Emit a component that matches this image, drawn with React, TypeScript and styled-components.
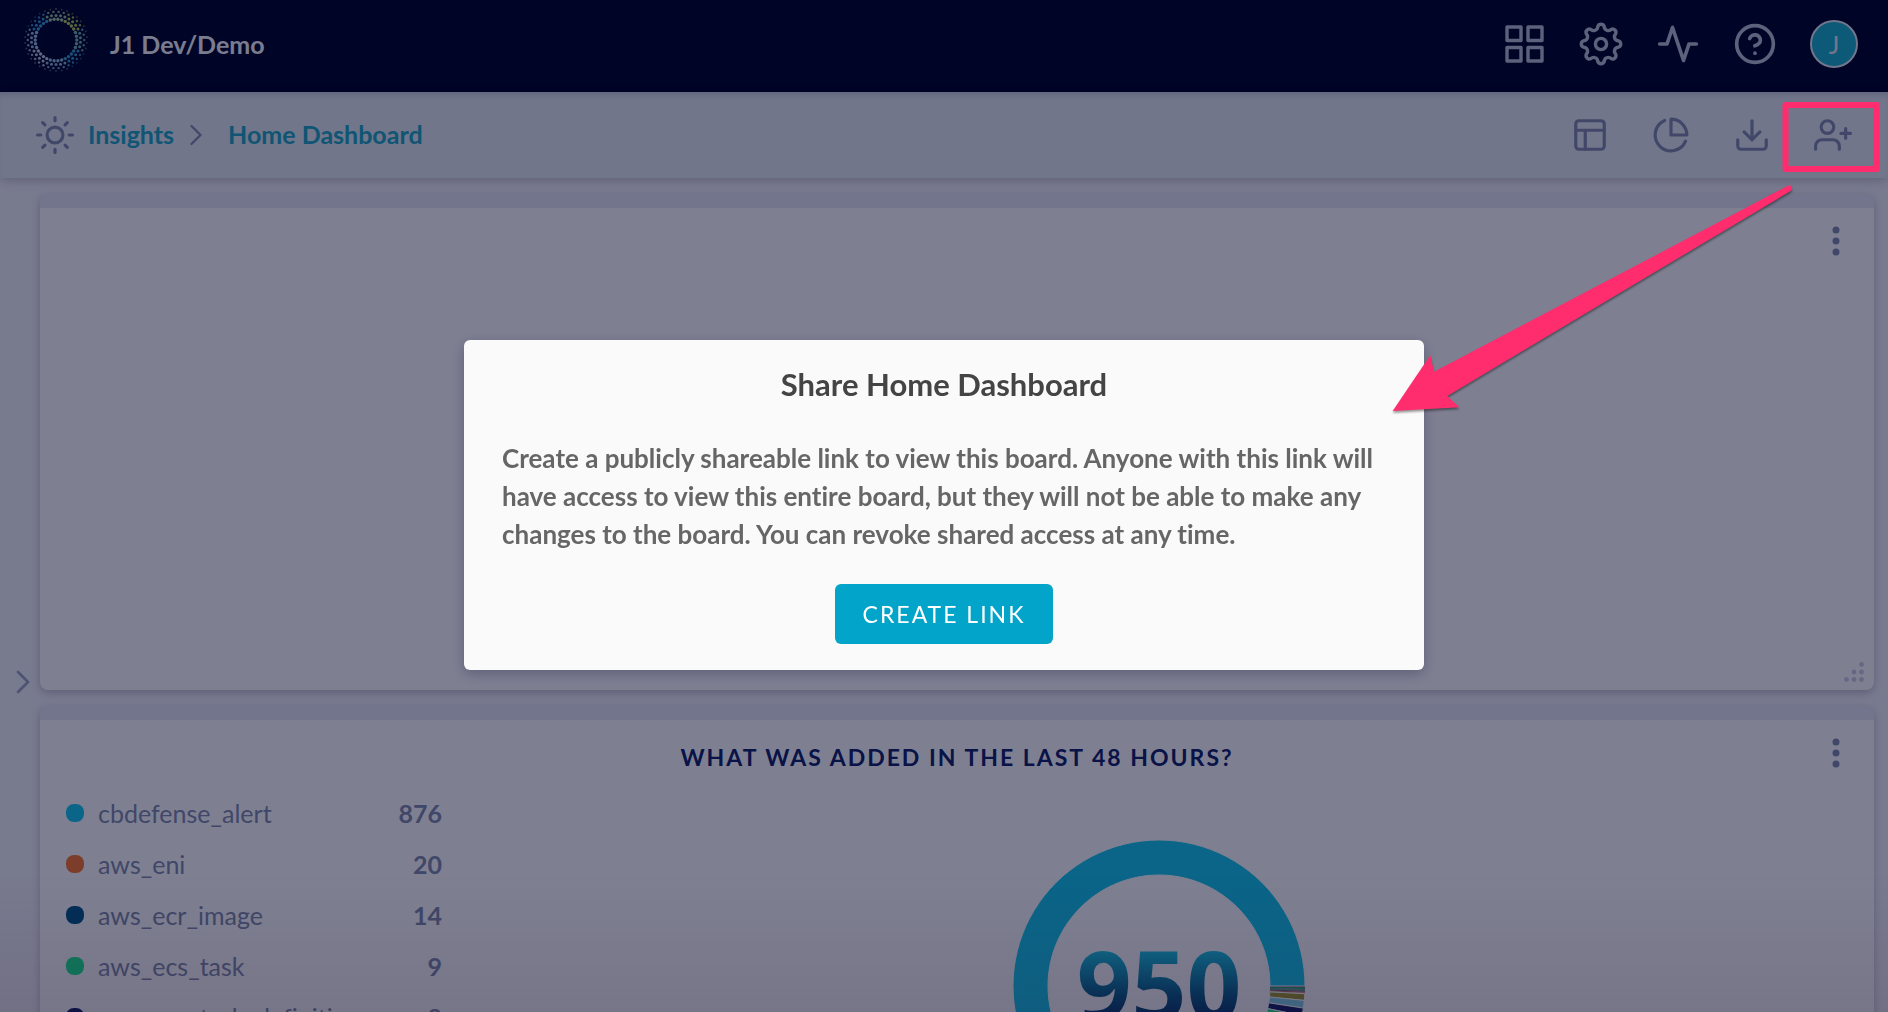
import React from "react";
import styled, { createGlobalStyle } from "styled-components";
import {
  FiActivity,
  FiChevronRight,
  FiDownload,
  FiHelpCircle,
  FiLayout,
  FiPieChart,
  FiSun,
  FiUserPlus,
} from "react-icons/fi";

const color = {
  navy: "#000426",
  page: "#f1f0f7",
  toolbar: "#e4e8f0",
  card: "#fcfdfe",
  text: "#828aaa",
  iconLight: "#b8c0d2",
  link: "#20a6c0",
  heading: "#122268",
  accent: "#02a5c9",
  pink: "#ff2d6e",
};

const GlobalStyle = createGlobalStyle`
  * { box-sizing: border-box; }
  body {
    margin: 0;
    overflow: hidden;
    background: ${color.page};
    font-family: Lato, "Open Sans", sans-serif;
    font-size: 25px;
    line-height: 32px;
    font-variant-ligatures: none;
    color: ${color.text};
  }
  h1, h2, p, ul, ol { margin: 0; padding: 0; }
  ul, ol { list-style: none; }
  a { color: inherit; text-decoration: none; }
`;

const Page = styled.div`
  height: 100vh;
  overflow: hidden;
  display: flex;
  flex-direction: column;
`;

const Header = styled.header`
  flex: none;
  height: 92px;
  padding: 0 30px 4px 24px;
  display: flex;
  align-items: center;
  justify-content: space-between;
  background: ${color.navy};
`;

const Brand = styled.a`
  display: flex;
  align-items: center;
  gap: 22px;
  font-weight: 700;
  color: #f4f4f8;

  svg {
    margin-bottom: 8px;
  }
`;

const Actions = styled.div<{ $gap: number }>`
  display: flex;
  align-items: center;
  gap: ${(p) => p.$gap}px;
`;

const IconButton = styled.button<{ $light?: boolean }>`
  display: flex;
  padding: 0;
  border: 0;
  background: none;
  color: ${(p) => (p.$light ? color.iconLight : color.text)};
  cursor: pointer;
`;

const Avatar = styled.button`
  width: 48px;
  height: 48px;
  padding: 0;
  border: 2px solid #e6e8ee;
  border-radius: 50%;
  background: #18aecb;
  color: #e6e8ee;
  font: inherit;
`;

const Toolbar = styled.div`
  position: relative;
  flex: none;
  height: 86px;
  padding: 0 36px;
  display: flex;
  align-items: center;
  justify-content: space-between;
  background: ${color.toolbar};
  box-shadow: 0 2px 10px rgba(0, 4, 38, 0.22), inset 0 6px 8px -6px rgba(0, 4, 38, 0.25);
`;

const Crumbs = styled.ol`
  display: flex;
  align-items: center;
  gap: 14px;
  font-weight: 700;
  color: ${color.link};

  li {
    display: flex;
    align-items: center;
    gap: 4px;
  }

  svg {
    color: ${color.text};
  }

  a {
    padding-bottom: 2px;
  }
`;

const Main = styled.main`
  flex: 1;
  min-height: 0;
  display: flex;
  padding: 16px 14px 0 0;
`;

const Rail = styled.aside`
  flex: none;
  width: 40px;
  padding-top: 468px;
  padding-left: 3px;
`;

const Board = styled.div`
  flex: 1;
  display: flex;
  flex-direction: column;
  gap: 16px;
`;

const Card = styled.section`
  position: relative;
  flex: none;
  height: 496px;
  border-top: 14px solid #e4e7f0;
  border-radius: 8px;
  background: ${color.card};
  box-shadow: 0 3px 8px rgba(0, 4, 38, 0.22);
`;

const CardMenu = styled.button`
  position: absolute;
  top: 16px;
  right: 28px;
  width: 20px;
  height: 36px;
  padding: 0;
  border: 0;
  background: none;
  color: ${color.text};
`;

const ResizeHandle = styled.svg`
  position: absolute;
  right: 8px;
  bottom: 6px;
  fill: #cacce0;
`;

const CardTitle = styled.h2`
  padding-top: 21px;
  text-align: center;
  font-size: 23px;
  font-weight: 700;
  letter-spacing: 2px;
  color: ${color.heading};
`;

const CardBody = styled.div`
  display: flex;
  padding: 14px 26px 0;
`;

const Legend = styled.ul`
  width: 376px;
`;

const LegendItem = styled.li`
  display: flex;
  align-items: center;
  gap: 14px;
  height: 51px;
`;

const Swatch = styled.span<{ $color: string }>`
  width: 18px;
  height: 18px;
  border-radius: 8px;
  background: ${(p) => p.$color};
`;

const LegendName = styled.span`
  flex: 1;
`;

const LegendValue = styled.span`
  font-weight: 700;
`;

const ChartArea = styled.div`
  flex: 1;
  display: flex;
  justify-content: center;
  padding: 53px 0 0 28px;
`;

const Chart = styled.div`
  display: grid;
  place-items: center;
  width: 292px;
  height: 292px;

  > * {
    grid-area: 1 / 1;
  }
`;

const Total = styled.span`
  font-family: "Open Sans", sans-serif;
  font-size: 96px;
  line-height: 92px;
  padding-bottom: 4px;
  font-weight: 700;
  color: transparent;
  background: linear-gradient(#1ccbe8 10%, #0a5c88 60%, #04205e 95%);
  background-clip: text;
`;

const Backdrop = styled.div`
  position: fixed;
  inset: 0;
  display: flex;
  align-items: center;
  justify-content: center;
  padding-bottom: 2px;
  background:
    linear-gradient(to top, rgba(60, 30, 50, 0.1), transparent 140px),
    rgba(0, 4, 38, 0.5);
`;

const Dialog = styled.div`
  width: 960px;
  padding: 25px 38px 26px;
  display: flex;
  flex-direction: column;
  align-items: center;
  border-radius: 6px;
  background: #fafafa;
  box-shadow: 0 4px 14px rgba(0, 4, 38, 0.25);
`;

const DialogTitle = styled.h1`
  font-size: 31px;
  line-height: 38px;
  font-weight: 700;
  color: #444;
`;

const DialogText = styled.p`
  align-self: stretch;
  margin: 36px 0 31px;
  font-size: 26px;
  line-height: 38px;
  font-weight: 700;
  color: #666;
`;

const PrimaryButton = styled.button`
  height: 60px;
  padding: 0 28px;
  border: 0;
  border-radius: 6px;
  background: ${color.accent};
  color: #fff;
  font: inherit;
  font-size: 23px;
  letter-spacing: 2px;
`;

const Callout = styled.svg`
  position: fixed;
  top: 0;
  right: 0;
  pointer-events: none;
`;

const Arrow = styled.path`
  fill: ${color.pink};
  filter: drop-shadow(0 2px 1px rgba(0, 0, 0, 0.4));
`;

const point = (r: number, deg: number) => {
  const a = (deg * Math.PI) / 180;
  return [r * Math.cos(a), r * Math.sin(a)];
};

const logoRings = [
  { r: 20.8, dot: 1.7, shift: 0, alpha: 1 },
  { r: 24.6, dot: 1.5, shift: 0.5, alpha: 0.95 },
  { r: 28.2, dot: 1.2, shift: 0, alpha: 0.85 },
  { r: 31, dot: 0.9, shift: 0.5, alpha: 0.5 },
];
const logoHues = ["#6fb8b0", "#3d9fd0", "#8fb8dc", "#c4cbe4", "#9fc0e0", "#3a9fd6", "#a3c79a", "#b8cc5c"];

const Logo = () => (
  <svg width="64" height="64" viewBox="-32 -32 64 64" aria-hidden="true">
    {logoRings.map((ring) =>
      Array.from({ length: 34 }, (_, i) => {
        const deg = ((i + ring.shift) * 360) / 34;
        const [x, y] = point(ring.r, deg);
        return (
          <circle
            key={`${ring.r}-${i}`}
            cx={x}
            cy={y}
            r={ring.dot}
            opacity={ring.alpha}
            fill={logoHues[Math.round(deg / 45) % 8]}
          />
        );
      })
    )}
  </svg>
);

const GridIcon = () => (
  <svg width="44" height="44" fill="none" stroke="currentColor" strokeWidth="3.4" strokeLinejoin="round">
    <rect x="5" y="5" width="14" height="13.5" />
    <rect x="26" y="5" width="14" height="13.5" />
    <rect x="5" y="25.5" width="14" height="13.5" />
    <rect x="26" y="25.5" width="14" height="13.5" />
  </svg>
);

const gearPath =
  Array.from({ length: 8 }, (_, i) => {
    const [x1, y1] = point(17.7, i * 45 - 10.5);
    const [x2, y2] = point(17.7, i * 45 + 10.5);
    const enter = i === 0 ? `M${x1} ${y1}` : `A4 4 0 0 0 ${x1} ${y1}`;
    return `${enter}A3.4 3.4 0 0 1 ${x2} ${y2}`;
  }).join("") + `A4 4 0 0 0 ${point(17.7, -10.5).join(" ")}Z`;

const GearIcon = () => (
  <svg width="44" height="44" viewBox="-22 -22 44 44" fill="none" stroke="currentColor" strokeWidth="3.4">
    <path d={gearPath} strokeLinejoin="round" />
    <circle r="5.6" />
  </svg>
);

const slices = [
  { value: 1, color: "#903878" },
  { value: 2, color: "#30a068" },
  { value: 1, color: "#287890" },
  { value: 1, color: "#588858" },
  { value: 1, color: "#285870" },
  { value: 1, color: "#c85060" },
  { value: 1, color: "#d89868" },
  { value: 7, color: "#a09830" },
  { value: 8, color: "#80d0e8" },
  { value: 8, color: "#142068" },
  { value: 9, color: "#20e890" },
  { value: 14, color: "#065888" },
  { value: 20, color: "#f87830" },
  { value: 876, color: "#14c6ea" },
];

const Donut = () => {
  const total = slices.reduce((sum, s) => sum + s.value, 0);
  let from = 0;
  return (
    <svg width="292" height="292" viewBox="-146 -146 292 292" stroke={color.card} aria-hidden="true">
      {slices.map((s) => {
        const to = from + (s.value / total) * 360;
        const large = to - from > 180 ? 1 : 0;
        const [x1, y1] = point(146, from);
        const [x2, y2] = point(146, to);
        const [x3, y3] = point(111, to);
        const [x4, y4] = point(111, from);
        from = to;
        return (
          <path
            key={s.color}
            d={`M${x1} ${y1}A146 146 0 ${large} 1 ${x2} ${y2}L${x3} ${y3}A111 111 0 ${large} 0 ${x4} ${y4}Z`}
            fill={s.color}
            strokeWidth={s.value > 2 ? 1 : 0}
          />
        );
      })}
    </svg>
  );
};

const legend = [
  { name: "cbdefense_alert", value: 876, color: "#14c6ea" },
  { name: "aws_eni", value: 20, color: "#f87830" },
  { name: "aws_ecr_image", value: 14, color: "#065888" },
  { name: "aws_ecs_task", value: 9, color: "#20e890" },
  { name: "aws_ecs_task_definition", value: 8, color: "#142068" },
];

const CardMenuButton = () => (
  <CardMenu aria-label="Widget menu">
    <svg width="20" height="36" fill="currentColor">
      <circle cx="10" cy="6" r="3.5" />
      <circle cx="10" cy="17" r="3.5" />
      <circle cx="10" cy="28" r="3.5" />
    </svg>
  </CardMenu>
);

export default function App() {
  return (
    <>
      <GlobalStyle />
      <Page>
        <Header>
          <Brand href="#">
            <Logo />
            J1 Dev/Demo
          </Brand>
          <Actions $gap={33}>
            <IconButton $light aria-label="Apps"><GridIcon /></IconButton>
            <IconButton $light aria-label="Settings"><GearIcon /></IconButton>
            <IconButton $light aria-label="Activity"><FiActivity size={44} /></IconButton>
            <IconButton $light aria-label="Help"><FiHelpCircle size={44} /></IconButton>
            <Avatar aria-label="Account">J</Avatar>
          </Actions>
        </Header>
        <Toolbar>
          <Crumbs>
            <li><FiSun size={38} /></li>
            <li><a href="#">Insights</a><FiChevronRight size={36} strokeWidth={1.5} /></li>
            <li><a href="#">Home Dashboard</a></li>
          </Crumbs>
          <Actions $gap={43}>
            <IconButton aria-label="Layout"><FiLayout size={38} /></IconButton>
            <IconButton aria-label="Charts"><FiPieChart size={38} /></IconButton>
            <IconButton aria-label="Download"><FiDownload size={38} /></IconButton>
            <IconButton aria-label="Share"><FiUserPlus size={38} /></IconButton>
          </Actions>
        </Toolbar>
        <Main>
          <Rail>
            <IconButton $light aria-label="Expand panel"><FiChevronRight size={40} strokeWidth={1.6} color="#9da3c0" /></IconButton>
          </Rail>
          <Board>
            <Card>
              <CardMenuButton />
              <ResizeHandle width="24" height="24">
                <circle cx="19.5" cy="4.5" r="2.4" />
                <circle cx="12" cy="12" r="2.4" />
                <circle cx="19.5" cy="12" r="2.4" />
                <circle cx="4.5" cy="19.5" r="2.4" />
                <circle cx="12" cy="19.5" r="2.4" />
                <circle cx="19.5" cy="19.5" r="2.4" />
              </ResizeHandle>
            </Card>
            <Card>
              <CardMenuButton />
              <CardTitle>WHAT WAS ADDED IN THE LAST 48 HOURS?</CardTitle>
              <CardBody>
                <Legend>
                  {legend.map((item) => (
                    <LegendItem key={item.name}>
                      <Swatch $color={item.color} />
                      <LegendName>{item.name}</LegendName>
                      <LegendValue>{item.value}</LegendValue>
                    </LegendItem>
                  ))}
                </Legend>
                <ChartArea>
                  <Chart>
                    <Donut />
                    <Total>950</Total>
                  </Chart>
                </ChartArea>
              </CardBody>
            </Card>
          </Board>
        </Main>
      </Page>
      <Backdrop>
        <Dialog role="dialog" aria-modal="true" aria-labelledby="share-title">
          <DialogTitle id="share-title">Share Home Dashboard</DialogTitle>
          <DialogText>
            Create a publicly shareable link to view this board. Anyone with this link will have
            access to view this entire board, but they will not be able to make any changes to the
            board. You can revoke shared access at any time.
          </DialogText>
          <PrimaryButton>CREATE LINK</PrimaryButton>
        </Dialog>
      </Backdrop>
      <Callout width="508" height="430" viewBox="1380 0 508 430" aria-hidden="true">
        <rect x="1785.5" y="105" width="91" height="64" fill="none" stroke={color.pink} strokeWidth="6" strokeLinejoin="round" />
        <Arrow d="M1788 185.700 Q1791.500 185 1792 188 Q1792 190 1790.500 191 L1447.300 396 L1459.300 407.300 L1392.700 411 L1430.300 355.300 L1434 371.700 Z" />
      </Callout>
    </>
  );
}
